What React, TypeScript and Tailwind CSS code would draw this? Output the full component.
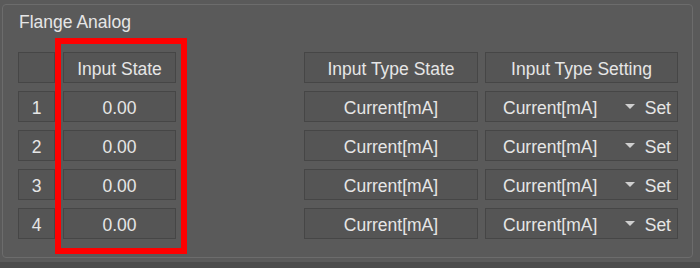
import React from "react";

const rows = ["1", "2", "3", "4"];

function Cell({ className = "", children }: { className?: string; children?: React.ReactNode }) {
  return (
    <div className={`h-[31px] border border-[#464646] bg-[#555555] flex items-center justify-center pt-[3px] leading-[18px] ${className}`}>
      {children}
    </div>
  );
}

export default function App() {
  return (
    <div
      className="relative w-[700px] h-[268px] bg-[#5a5a5a] overflow-hidden text-[#e6e6e6] text-[17.5px]"
      style={{ fontFamily: '"Liberation Sans", Arial, sans-serif' }}
    >
      <div className="ml-[2px] mt-[4px] w-[691px] h-[254px] rounded-[4px] border border-[#6c6c6c] bg-[#5a5a5a] pt-[8px] pl-[15px] pr-[14px]">
        <div className="h-[18px] leading-[18px] pl-[1px]">Flange Analog</div>

        <div className="mt-[21px] flex flex-col gap-[8px]">
          {/* header row */}
          <div className="flex">
            <Cell className="w-[37px]" />
            <Cell className="ml-[8px] w-[113px]">Input State</Cell>
            <div className="flex-1" />
            <Cell className="w-[174px]">Input Type State</Cell>
            <Cell className="ml-[7px] w-[193px]">Input Type Setting</Cell>
          </div>

          {rows.map((n) => (
            <div key={n} className="flex">
              <Cell className="w-[37px]">{n}</Cell>
              <Cell className="ml-[8px] w-[113px]">0.00</Cell>
              <div className="flex-1" />
              <Cell className="w-[174px]">Current[mA]</Cell>
              <Cell className="ml-[7px] w-[193px] !justify-start pl-[17px] pr-[5px]">
                <span>Current[mA]</span>
                <svg width="10" height="5" viewBox="0 0 10 5" className="ml-auto mr-[10px] mb-[3px]">
                  <polygon points="0,0 10,0 5,5" fill="#cfcfcf" />
                </svg>
                <span className="mr-[1px]">Set</span>
              </Cell>
            </div>
          ))}
        </div>
      </div>

      <div className="absolute left-0 right-0 bottom-0 h-[6px] bg-[#4b4b4b]" />

      {/* highlight box */}
      <div className="absolute left-[55px] top-[38px] w-[132px] h-[216px] border-[6px] border-[#ff0000]" />
    </div>
  );
}
